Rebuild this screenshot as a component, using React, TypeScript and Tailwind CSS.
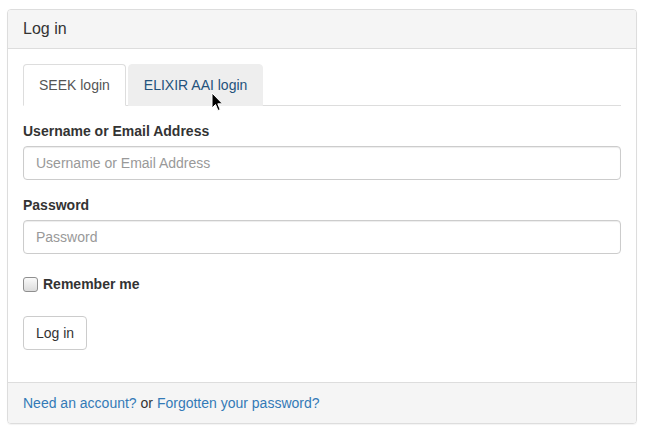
import React from 'react';

function Cursor() {
  return (
    <svg
      className="absolute left-[211px] top-[92px] pointer-events-none"
      width="13"
      height="20"
      viewBox="0 0 13 20"
    >
      <path
        d="M1 1 L1 16 L4.5 12.5 L7 18.5 L9.2 17.6 L6.8 11.8 L11.5 11.8 Z"
        fill="#000"
        stroke="#fff"
        strokeWidth="1"
        strokeLinejoin="round"
      />
    </svg>
  );
}

export default function App() {
  return (
    <div className="relative w-[648px] h-[435px] bg-white text-[14px] leading-[20px] text-[#333] font-['Liberation_Sans',Arial,sans-serif]">
      <div className="ml-[7px] pt-[9px] w-[630px]">
        <div className="border border-[#ddd] rounded-[4px] shadow-[0_1px_1px_rgba(0,0,0,0.05)]">
          <div className="bg-[#f5f5f5] border-b border-[#ddd] rounded-t-[3px] px-[15px] py-[10px] text-[16px] leading-[18px]">
            Log in
          </div>

          <div className="px-[15px] pt-[15px] pb-[32px]">
            <ul className="flex border-b border-[#ddd]">
              <li className="-mb-px mr-[2px]">
                <span className="block px-[15px] py-[10px] border border-[#ddd] border-b-transparent rounded-t-[4px] bg-white text-[#555]">
                  SEEK login
                </span>
              </li>
              <li className="-mb-px">
                <span className="block px-[15px] py-[10px] border border-[#eee] rounded-t-[4px] bg-[#eee] text-[#23527c]">
                  ELIXIR AAI login
                </span>
              </li>
            </ul>

            <div className="mt-[15px]">
              <div className="mb-[15px]">
                <label className="block font-bold mb-[5px]">Username or Email Address</label>
                <input
                  type="text"
                  placeholder="Username or Email Address"
                  className="block w-full h-[34px] px-[12px] py-[6px] border border-[#ccc] rounded-[4px] shadow-[inset_0_1px_1px_rgba(0,0,0,0.075)] placeholder:text-[#999] outline-none"
                />
              </div>
              <div>
                <label className="block font-bold mb-[5px]">Password</label>
                <input
                  type="password"
                  placeholder="Password"
                  className="block w-full h-[34px] px-[12px] py-[6px] border border-[#ccc] rounded-[4px] shadow-[inset_0_1px_1px_rgba(0,0,0,0.075)] placeholder:text-[#999] outline-none"
                />
              </div>

              <div className="mt-[20px] flex items-center">
                <span className="w-[15px] h-[15px] border border-[#8f8f8f] rounded-[3px] bg-gradient-to-b from-[#fafafa] to-[#dcdcdc] mr-[5px]" />
                <span className="font-bold">Remember me</span>
              </div>

              <button className="mt-[22px] h-[34px] px-[12px] border border-[#ccc] rounded-[4px] bg-white text-[#333]">
                Log in
              </button>
            </div>
          </div>

          <div className="bg-[#f5f5f5] border-t border-[#ddd] rounded-b-[3px] px-[15px] py-[10px]">
            <span className="text-[#337ab7]">Need an account?</span> or{' '}
            <span className="text-[#337ab7]">Forgotten your password?</span>
          </div>
        </div>
      </div>
      <Cursor />
    </div>
  );
}
